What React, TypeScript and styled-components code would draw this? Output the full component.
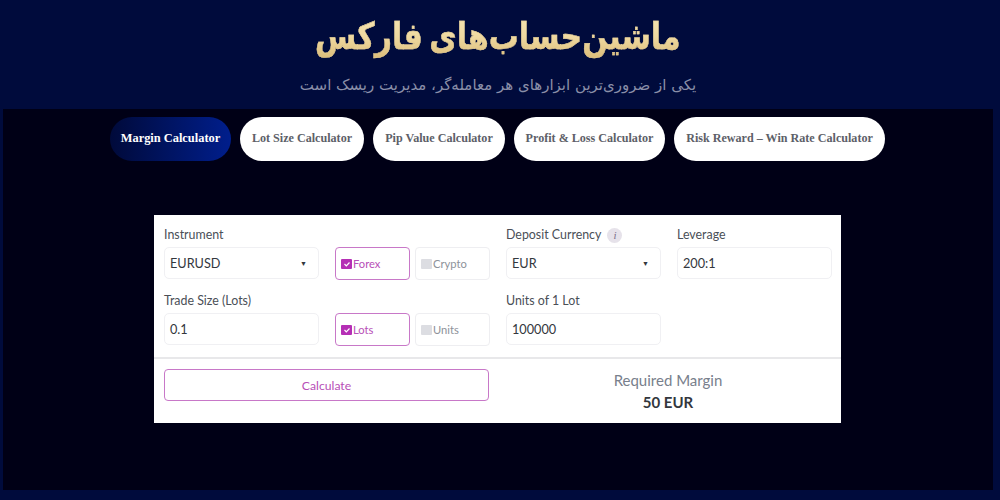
import React from "react";
import styled, { createGlobalStyle } from "styled-components";

const Global = createGlobalStyle`
  html, body { margin: 0; padding: 0; background: #000b3c; }
  * { box-sizing: border-box; }
`;

const Page = styled.div`
  width: 1000px;
  height: 500px;
  overflow: hidden;
  display: flex;
  flex-direction: column;
  background: #000b3c;
`;

const Hero = styled.header`
  height: 109px;
  flex: none;
  display: flex;
  flex-direction: column;
  align-items: center;
  direction: rtl;
  font-family: "DejaVu Sans", sans-serif;
  padding-right: 4px;
`;

const Title = styled.h1`
  margin: 8px 0 0;
  font-size: 37px;
  line-height: 58px;
  font-weight: 700;
  word-spacing: -5px;
  white-space: nowrap;
  transform: scaleX(0.81);
  background: linear-gradient(180deg, #f8e9b8 0%, #efd9a0 50%, #d4b36c 100%);
  -webkit-background-clip: text;
  background-clip: text;
  color: transparent;
  -webkit-text-stroke: 0.4px #e6cf96;
`;

const Subtitle = styled.p`
  margin: 7px 0 0;
  font-size: 15px;
  line-height: 24px;
  color: #8a8fa8;
`;

const Main = styled.main`
  flex: 1;
  margin: 0 7px 10px 3px;
  padding: 8px 1px 0 0;
  background: #000016;
  display: flex;
  flex-direction: column;
  align-items: center;
`;

const Tabs = styled.nav`
  display: flex;
  gap: 9px;
`;

const Tab = styled.div<{ $active?: boolean; $w: number }>`
  width: ${(p) => p.$w}px;
  height: 44px;
  padding-bottom: 1px;
  border-radius: 22px;
  display: flex;
  align-items: center;
  justify-content: center;
  font-family: "Liberation Serif", serif;
  font-weight: 700;
  font-size: ${(p) => (p.$active ? 12.4 : 12.1)}px;
  white-space: nowrap;
  color: ${(p) => (p.$active ? "#ffffff" : "#5d6068")};
  background: ${(p) =>
    p.$active ? "linear-gradient(90deg, #000a3a 0%, #001e8c 100%)" : "#ffffff"};
`;

const Card = styled.section`
  width: 687px;
  height: 208px;
  margin-top: 54px;
  background: #ffffff;
  font-family: "Lato", sans-serif;
  display: flex;
  flex-direction: column;
`;

const FormGrid = styled.div`
  height: 142px;
  flex: none;
  padding: 11px 10px 0;
  display: grid;
  grid-template-columns: repeat(4, 155px);
  grid-auto-rows: 66px;
  column-gap: 16px;
`;

const Field = styled.div`
  display: flex;
  flex-direction: column;
  justify-content: flex-start;
`;

const Label = styled.label`
  height: 21px;
  padding-bottom: 3px;
  display: flex;
  align-items: center;
  gap: 6px;
  font-size: 12.4px;
  line-height: 16px;
  color: #4a4f57;
`;

const Info = styled.span`
  width: 15px;
  height: 15px;
  border-radius: 50%;
  background: #e6e2ea;
  color: #7c6f8c;
  font-family: "Liberation Serif", serif;
  font-style: italic;
  font-size: 11px;
  display: inline-flex;
  align-items: center;
  justify-content: center;
`;

const Control = styled.div`
  height: 32px;
  padding: 0 5px;
  border: 1px solid #f0f0f3;
  border-radius: 5px;
  display: flex;
  align-items: center;
  justify-content: space-between;
  font-size: 12.7px;
  color: #33373d;
`;

const Caret = styled.span`
  font-size: 7px;
  color: #33373d;
  margin-right: 6px;
`;

const ToggleGroup = styled.div`
  padding-top: 21px;
  display: flex;
  gap: 5px;
`;

const Toggle = styled.div<{ $on?: boolean }>`
  width: 75px;
  height: 33px;
  padding-left: 5px;
  border: 1px solid ${(p) => (p.$on ? "#c878c8" : "#eeeef1")};
  border-radius: 4px;
  display: flex;
  align-items: center;
  gap: 1px;
  font-size: 11.2px;
  color: ${(p) => (p.$on ? "#b84fb8" : "#8d929a")};
`;

const Box = styled.span<{ $on?: boolean }>`
  width: 11px;
  height: 10px;
  flex: none;
  border-radius: 1px;
  background: ${(p) => (p.$on ? "#b52fb5" : "#dcdde2")};
  display: flex;
  align-items: center;
  justify-content: center;
`;

const Footer = styled.div`
  flex: 1;
  border-top: 2px solid #e8e8ea;
  padding: 10px 10px 0;
  display: grid;
  grid-template-columns: 325px 1fr;
  column-gap: 16px;
`;

const Calculate = styled.button`
  height: 32px;
  background: #ffffff;
  border: 1px solid #c878c8;
  border-radius: 4px;
  font-family: "Lato", sans-serif;
  font-size: 12.2px;
  color: #b84fb8;
  padding: 0;
`;

const Result = styled.div`
  display: flex;
  flex-direction: column;
  align-items: center;
`;

const ResultLabel = styled.div`
  margin-top: 2px;
  font-size: 15px;
  line-height: 19px;
  color: #78808c;
`;

const ResultValue = styled.div`
  margin-top: 3px;
  font-size: 15px;
  line-height: 19px;
  font-weight: 700;
  color: #33373d;
`;

const Check = () => (
  <svg width="8" height="8" viewBox="0 0 8 8" fill="none">
    <path d="M1.5 4l1.8 1.8L6.5 2.5" stroke="#fff" strokeWidth="1.2" />
  </svg>
);

const tabs: [string, number][] = [
  ["Margin Calculator", 121],
  ["Lot Size Calculator", 124],
  ["Pip Value Calculator", 132],
  ["Profit & Loss Calculator", 151],
  ["Risk Reward – Win Rate Calculator", 211],
];

const ToggleItem = ({ on, children }: { on?: boolean; children: React.ReactNode }) => (
  <Toggle $on={on}>
    <Box $on={on}>{on && <Check />}</Box>
    {children}
  </Toggle>
);

export default function App() {
  return (
    <Page>
      <Global />
      <Hero>
        <Title>ماشین‌حساب‌های فارکس</Title>
        <Subtitle>یکی از ضروری‌ترین ابزارهای هر معامله‌گر، مدیریت ریسک است</Subtitle>
      </Hero>
      <Main>
        <Tabs>
          {tabs.map(([t, w], i) => (
            <Tab key={t} $w={w} $active={i === 0}>
              {t}
            </Tab>
          ))}
        </Tabs>
        <Card>
          <FormGrid>
            <Field>
              <Label>Instrument</Label>
              <Control>
                EURUSD<Caret>▼</Caret>
              </Control>
            </Field>
            <ToggleGroup>
              <ToggleItem on>Forex</ToggleItem>
              <ToggleItem>Crypto</ToggleItem>
            </ToggleGroup>
            <Field>
              <Label>
                Deposit Currency <Info>i</Info>
              </Label>
              <Control>
                EUR<Caret>▼</Caret>
              </Control>
            </Field>
            <Field>
              <Label>Leverage</Label>
              <Control>200:1</Control>
            </Field>
            <Field>
              <Label>Trade Size (Lots)</Label>
              <Control>0.1</Control>
            </Field>
            <ToggleGroup>
              <ToggleItem on>Lots</ToggleItem>
              <ToggleItem>Units</ToggleItem>
            </ToggleGroup>
            <Field>
              <Label>Units of 1 Lot</Label>
              <Control>100000</Control>
            </Field>
          </FormGrid>
          <Footer>
            <Calculate>Calculate</Calculate>
            <Result>
              <ResultLabel>Required Margin</ResultLabel>
              <ResultValue>50 EUR</ResultValue>
            </Result>
          </Footer>
        </Card>
      </Main>
    </Page>
  );
}
